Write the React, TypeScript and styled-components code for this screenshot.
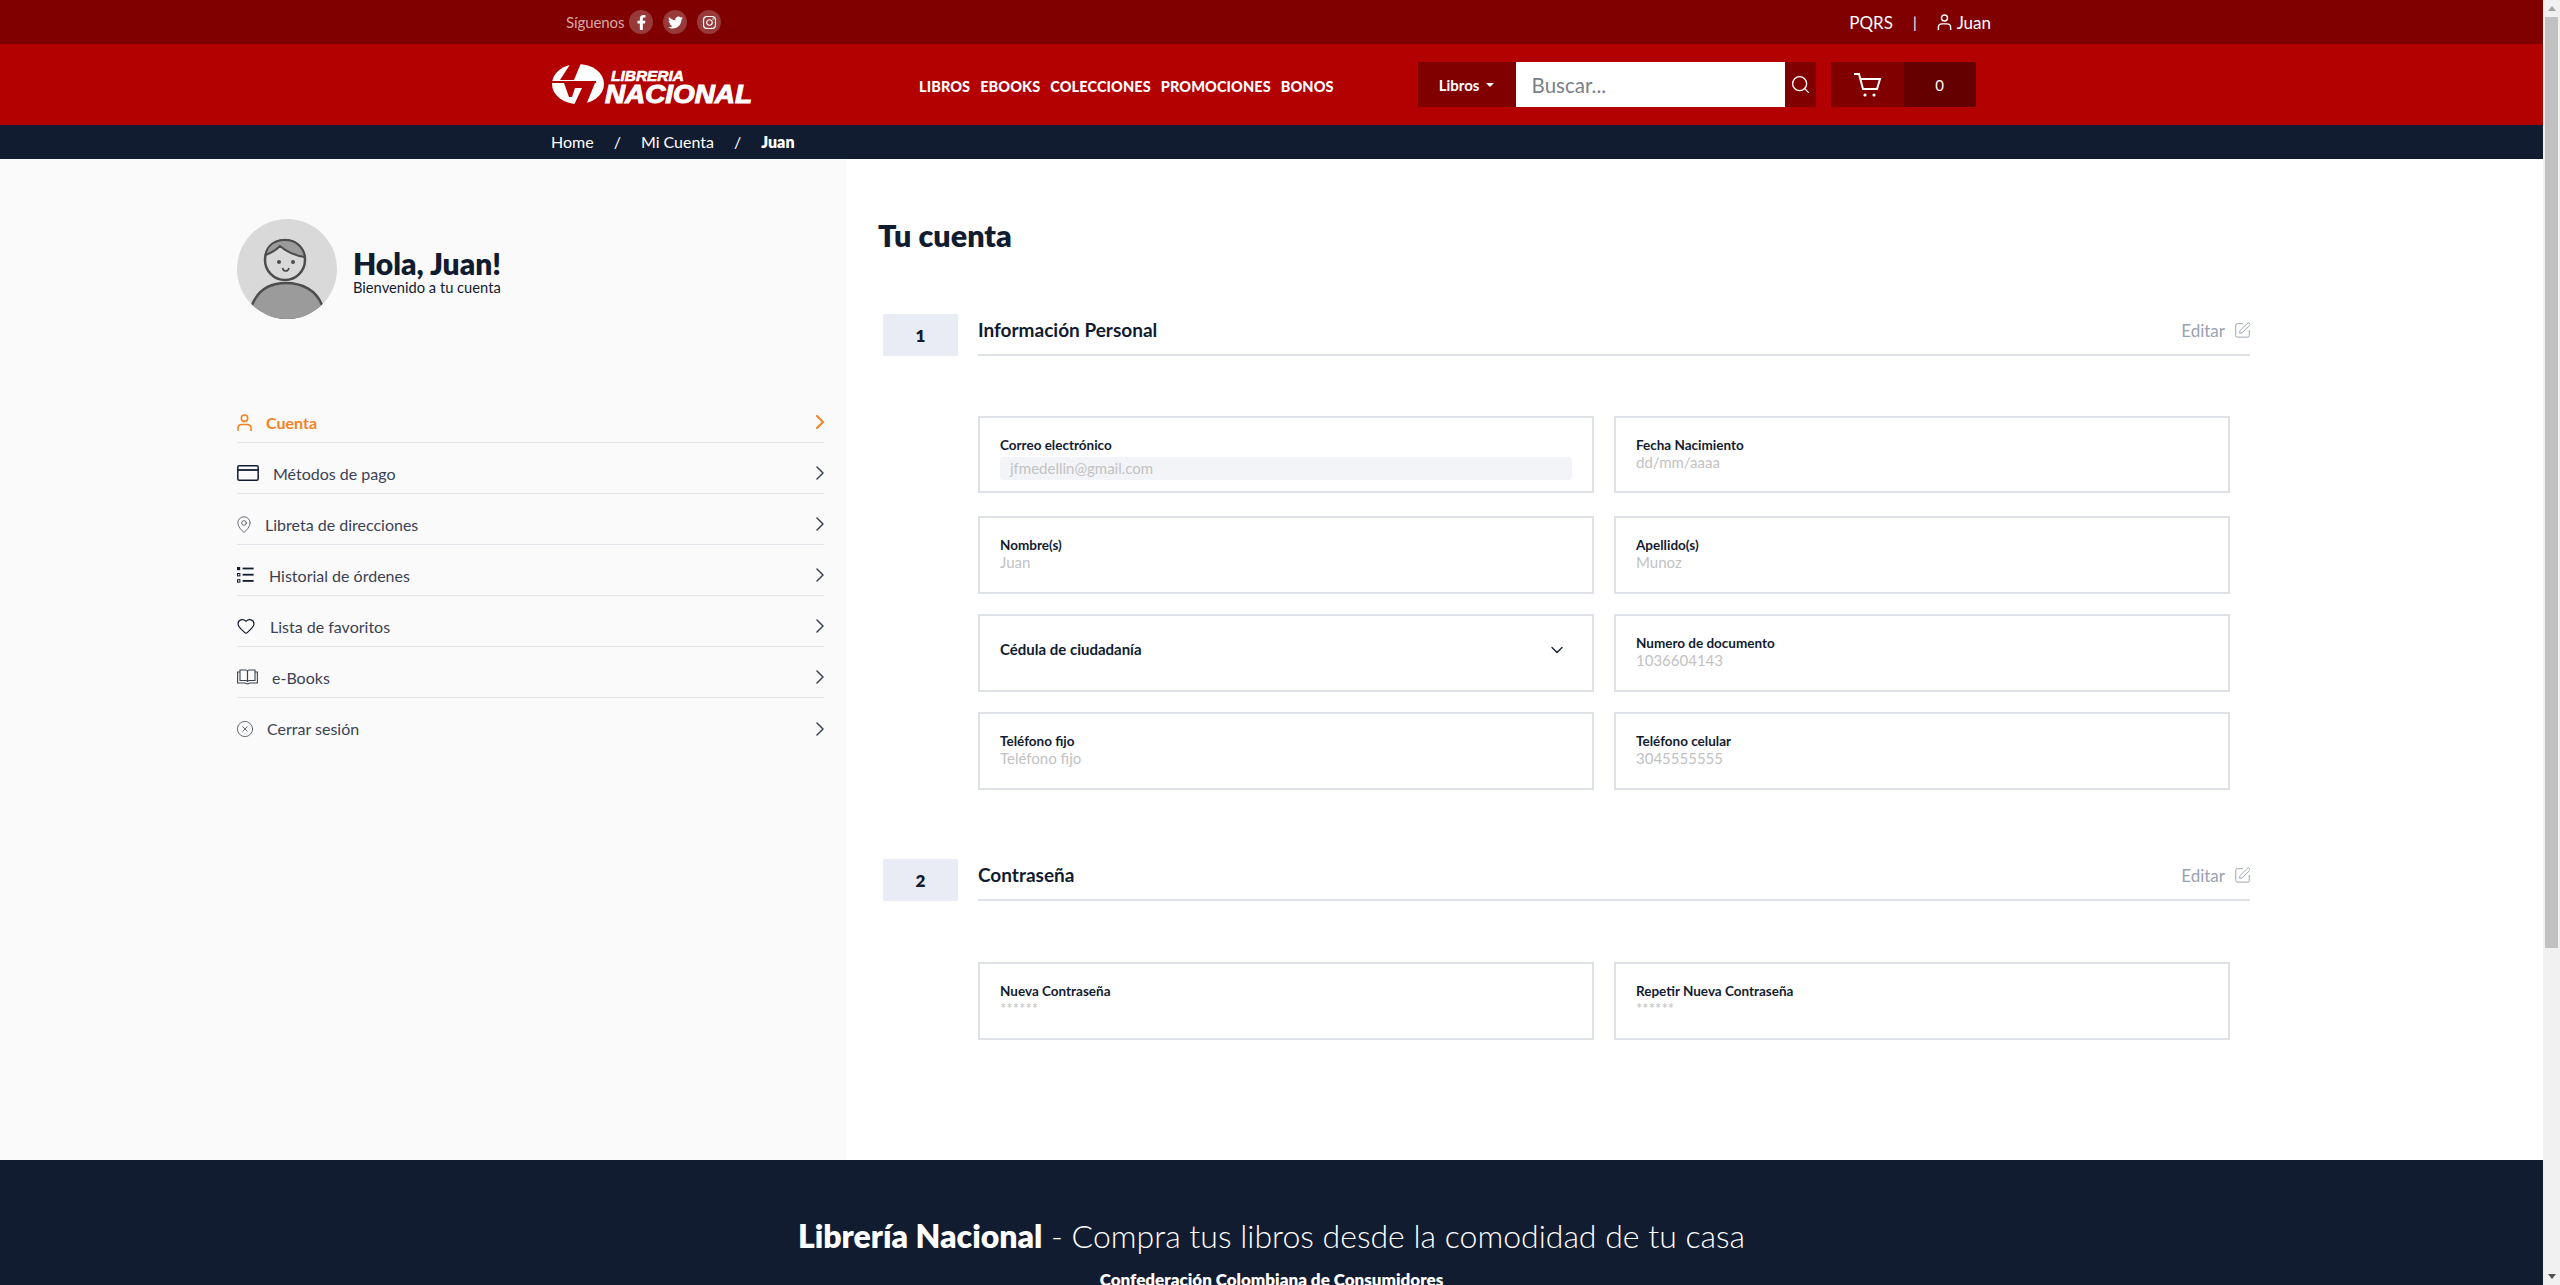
import * as React from 'react'
import styled, {createGlobalStyle} from 'styled-components'
import {ChevronDown, ChevronRight, CircleX, Heart, MapPin, Search, SquarePen} from 'lucide-react'
import {FaFacebookF, FaInstagram, FaTwitter} from 'react-icons/fa'

const FONT = '"Lato", "Noto Sans", sans-serif'

const GlobalStyle = createGlobalStyle`
  body {
    margin: 0;
    font-family: ${FONT};
    color: #121c30;
    background: #fff;
    overflow-x: hidden;
  }
  * { box-sizing: border-box; }
`

const Page = styled.div`
  width: 2543px;
`

const ScrollTrack = styled.div`
  position: fixed;
  top: 0;
  right: 0;
  bottom: 0;
  display: flex;
  flex-direction: column;
  width: 17px;
  background: #f1f1f1;
`

const ScrollArrow = styled.div<{$down?: boolean}>`
  width: 0;
  height: 0;
  margin: 6px auto;
  border-left: 4px solid transparent;
  border-right: 4px solid transparent;
  ${p => (p.$down ? 'border-top: 5px solid #505050; margin-top: auto;' : 'border-bottom: 5px solid #a3a3a3;')}
`

const ScrollThumb = styled.div`
  height: 931px;
  margin: 0 2px;
  background: #c1c1c1;
`

const TopBar = styled.div`
  display: flex;
  align-items: center;
  height: 44px;
  padding: 0 552px 0 566px;
  background: #800000;
  color: #fff;
  font-size: 16px;
`

const Follow = styled.span`
  color: #d9a6a6;
  font-size: 15px;
  letter-spacing: -0.1px;
  margin-right: 5px;
`

const SocialLink = styled.span`
  display: flex;
  align-items: center;
  justify-content: center;
  width: 24px;
  height: 24px;
  margin-right: 10px;
  border-radius: 50%;
  background: #983a3a;
  color: #fff;
  font-size: 15px;
`

const TopRight = styled.div`
  display: flex;
  align-items: center;
  margin-left: auto;
  font-size: 17px;
`

const TopSeparator = styled.span`
  margin: 0 20px;
  font-size: 15px;
`

const JuanName = styled.span`
  margin-left: 5px;
`

const HeaderBar = styled.div`
  display: flex;
  align-items: center;
  height: 81px;
  padding-left: 552px;
  background: #b30000;
`

const NavList = styled.nav`
  display: flex;
  gap: 10px;
  margin-left: 165px;
  padding-top: 4px;
  color: #fff;
  font-size: 14.5px;
  font-weight: 900;
  letter-spacing: 0.1px;
`

const SearchBox = styled.div`
  display: flex;
  height: 45px;
  margin-left: 84px;
`

const CategoryButton = styled.div`
  display: flex;
  align-items: center;
  justify-content: center;
  gap: 7px;
  width: 98px;
  background: #800000;
  color: #fff;
  font-size: 15px;
  font-weight: 700;
`

const Caret = styled.span`
  width: 0;
  height: 0;
  border-left: 4px solid transparent;
  border-right: 4px solid transparent;
  border-top: 4px solid #fff;
`

const SearchInput = styled.div`
  display: flex;
  align-items: center;
  width: 269px;
  padding-left: 16px;
  background: #fff;
  color: #7b8088;
  font-size: 20.5px;
`

const SearchButton = styled.div`
  display: flex;
  align-items: center;
  justify-content: center;
  width: 31px;
  background: #800000;
  color: #fff;
`

const CartBox = styled.div`
  display: flex;
  height: 45px;
  margin-left: 15px;
`

const CartIcon = styled.div`
  display: flex;
  align-items: center;
  justify-content: center;
  width: 73px;
  background: #800000;
`

const CartCount = styled.div`
  display: flex;
  align-items: center;
  justify-content: center;
  width: 72px;
  background: #640000;
  color: #fff;
  font-size: 15px;
`

const Crumbs = styled.div`
  display: flex;
  align-items: center;
  height: 34px;
  padding: 0 0 2px 551px;
  background: #121c30;
  color: #fff;
  font-size: 16px;
`

const CrumbSeparator = styled.span`
  margin: 0 20px;
`

const CrumbCurrent = styled.span`
  font-weight: 800;
`

const Layout = styled.div`
  display: flex;
  height: 1001px;
`

const Sidebar = styled.aside`
  width: 847px;
  padding: 60px 23px 0 237px;
  background: #fafafa;
`

const Profile = styled.div`
  display: flex;
  align-items: center;
  gap: 16px;
  margin-bottom: 73px;
`

const Greeting = styled.h2`
  margin: 5px 0 0;
  font-size: 30px;
  line-height: 30px;
  font-weight: 800;
`

const Welcome = styled.div`
  margin-top: 1px;
  font-size: 14.7px;
  line-height: 16px;
  font-weight: 400;
`

const MenuRow = styled.div<{$active?: boolean}>`
  display: flex;
  align-items: center;
  height: 51px;
  padding-top: 10px;
  border-bottom: 1px solid #e3e4ea;
  color: ${p => (p.$active ? '#f5821f' : '#3b4252')};
  font-size: 16px;
  font-weight: ${p => (p.$active ? 700 : 400)};

  &:last-child {
    border-bottom: 0;
  }
`

const MenuIcon = styled.span<{$gap: number}>`
  display: flex;
  margin-right: ${p => p.$gap}px;
`

const MenuChevron = styled(ChevronRight)`
  margin-left: auto;
`

const Content = styled.main`
  flex: 1;
  padding: 60px 0 0 31px;
`

const PageTitle = styled.h1`
  margin: 0 0 59px;
  height: 36px;
  font-size: 30.5px;
  line-height: 33px;
  font-weight: 800;
`

const SectionHead = styled.div`
  display: flex;
  margin-left: 5px;
  width: 1367px;
  gap: 20px;
`

const StepNumber = styled.div`
  display: flex;
  align-items: center;
  justify-content: center;
  width: 75px;
  height: 42px;
  background: #e9ecf5;
  font-size: 17px;
  font-weight: 800;
`

const SectionBar = styled.div`
  display: flex;
  flex: 1;
  justify-content: space-between;
  height: 42px;
  padding-top: 4px;
  border-bottom: 2px solid #dee2e6;
`

const SectionTitle = styled.div`
  font-size: 19px;
  line-height: 24px;
  font-weight: 700;
`

const EditLink = styled.div`
  display: flex;
  align-items: center;
  gap: 10px;
  height: 24px;
  color: #9aa2b1;
  font-size: 17px;
`

const FieldGrid = styled.div<{$before: number; $after: number}>`
  display: grid;
  grid-template-columns: 616px 616px;
  gap: 20px;
  margin: ${p => p.$before}px 0 ${p => p.$after}px 100px;
`

const FieldBox = styled.div<{$first?: boolean}>`
  height: ${p => (p.$first ? 77 : 78)}px;
  margin-bottom: ${p => (p.$first ? 3 : 0)}px;
  padding: 19px 20px 0;
  border: 2px solid #dee2e6;
`

const FieldLabel = styled.div`
  font-size: 13.5px;
  line-height: 16px;
  font-weight: 700;
`

const FieldValue = styled.div<{$filled?: boolean}>`
  margin-top: ${p => (p.$filled ? 4 : 1)}px;
  padding-left: ${p => (p.$filled ? 10 : 0)}px;
  border-radius: 4px;
  background: ${p => (p.$filled ? '#f3f4f8' : 'transparent')};
  color: #c2c2c2;
  font-size: 15px;
  line-height: ${p => (p.$filled ? 23 : 17)}px;
`

const SelectBox = styled(FieldBox)`
  display: flex;
  align-items: flex-start;
  justify-content: space-between;
  padding-top: 24px;
  padding-right: 25px;
  font-size: 15px;
  line-height: 18px;
  font-weight: 700;
`

const Footer = styled.footer`
  height: 570px;
  padding-top: 59px;
  background: #121c30;
  color: #fff;
  text-align: center;
`

const FooterTitle = styled.div`
  font-size: 32px;
  line-height: 33px;
  font-weight: 300;

  strong {
    font-weight: 800;
  }
`

const FooterLine = styled.div`
  margin-top: 18px;
  font-size: 17px;
  line-height: 20px;
  font-weight: 800;
`

const Logo = () => (
  <svg width="202" height="42" viewBox="0 0 202 42">
    <ellipse cx="26" cy="20" rx="26" ry="20" fill="#fff"/>
    <path d="M19 -1 L29 -1 L22 16 L8 16 Z" fill="#b30000"/>
    <path d="M0 17 H44 V19 H0 Z" fill="#b30000"/>
    <path d="M12 19 L17 33 L20 33 L23 24 L30 24 L22 41 L34 41 L43 19 Z" fill="#b30000"/>
    <text x="59" y="17" fill="#fff" stroke="#fff" strokeWidth="0.6" fontFamily="Liberation Sans, sans-serif" fontStyle="italic" fontWeight="700" fontSize="14" textLength="73" lengthAdjust="spacingAndGlyphs">LIBRERIA</text>
    <text x="53" y="39" fill="#fff" stroke="#fff" strokeWidth="1.1" fontFamily="Liberation Sans, sans-serif" fontStyle="italic" fontWeight="700" fontSize="26" textLength="147" lengthAdjust="spacingAndGlyphs">NACIONAL</text>
  </svg>
)

const Cart = () => (
  <svg width="29" height="27" viewBox="0 0 29 27" fill="none" stroke="#fff" strokeWidth="2">
    <path d="M1 3 H6 L10 18 H24 L27 8 H8"/>
    <circle cx="12" cy="24" r="1.6" fill="#fff" stroke="none"/>
    <circle cx="21" cy="24" r="1.6" fill="#fff" stroke="none"/>
  </svg>
)

const UserIcon = ({width, height, stroke}: {width: number; height: number; stroke: number}) => (
  <svg width={width} height={height} viewBox="0 0 15 17" fill="none" stroke="currentColor" strokeWidth={stroke}>
    <circle cx="7.5" cy="4.2" r="3.2"/>
    <path d="M1 17 V14 C1 11.5 3 10.5 5 10.5 H10 C12 10.5 14 11.5 14 14 V17"/>
  </svg>
)

const Avatar = () => (
  <svg width="100" height="100" viewBox="0 0 100 100">
    <clipPath id="avatar-clip"><circle cx="50" cy="50" r="50"/></clipPath>
    <circle cx="50" cy="50" r="50" fill="#d9d9d9"/>
    <g clipPath="url(#avatar-clip)" stroke="#4d4d4d" strokeWidth="2.5">
      <path d="M15 86 C21 71 33 64 49 64 C65 64 79 71 85 86 L85 100 L15 100 Z" fill="#9b9b9b"/>
      <path d="M15 86 L15 100 L85 100 L85 86" fill="#9b9b9b" stroke="none"/>
      <circle cx="48" cy="41" r="20" fill="#d9d9d9"/>
      <path d="M28.5 36 C30 26 38 21 48 21 C58 21 66 27 68 38 C60 37 50 33 43 27 C39 31 34 34 28.5 36 Z" fill="#9b9b9b" strokeWidth="2"/>
      <circle cx="42" cy="43" r="2" fill="#4d4d4d" stroke="none"/>
      <circle cx="56" cy="43" r="2" fill="#4d4d4d" stroke="none"/>
      <path d="M45.5 49 C46.5 53 51 53 52 49" fill="none" strokeWidth="1.6"/>
    </g>
  </svg>
)

const CardIcon = () => (
  <svg width="22" height="16" viewBox="0 0 22 16" fill="none" stroke="#121c30" strokeWidth="1.5">
    <rect x="0.8" y="0.8" width="20.4" height="14.4" rx="1.5"/>
    <path d="M1 5 H21" strokeWidth="1.8"/>
  </svg>
)

const ListIcon = () => (
  <svg width="17" height="16" viewBox="0 0 17 16" fill="#121c30">
    <rect x="0" y="0" width="3.2" height="3.2"/>
    <rect x="5.6" y="0.6" width="11" height="1.8"/>
    <rect x="0.5" y="6.5" width="2.4" height="2.4" fill="none" stroke="#121c30"/>
    <rect x="5.6" y="6.8" width="11" height="1.8"/>
    <rect x="0.5" y="12.7" width="2.4" height="2.4" fill="none" stroke="#121c30"/>
    <rect x="5.6" y="13" width="11" height="1.8"/>
  </svg>
)

const BookIcon = () => (
  <svg width="21" height="16" viewBox="0 0 21 16" fill="none" stroke="#3b4252" strokeWidth="1.1">
    <path d="M3 1 H9 C10 1 10.5 2 10.5 3 V13 C10.5 12 10 11.5 9 11.5 H3 Z"/>
    <path d="M18 1 H12 C11 1 10.5 2 10.5 3 V13 C10.5 12 11 11.5 12 11.5 H18 Z"/>
    <path d="M3 3 H0.6 V14 H8 L10.5 15 L13 14 H20.4 V3 H18"/>
  </svg>
)

const menu: {label: string; gap: number; icon: React.ReactNode; active?: boolean}[] = [
  {label: 'Cuenta', gap: 14, active: true, icon: <UserIcon width={15} height={17} stroke={1.6}/>},
  {label: 'Métodos de pago', gap: 14, icon: <CardIcon/>},
  {label: 'Libreta de direcciones', gap: 14, icon: <MapPin width={14} height={17} viewBox="3 1 18 22" strokeWidth={1}/>},
  {label: 'Historial de órdenes', gap: 15, icon: <ListIcon/>},
  {label: 'Lista de favoritos', gap: 15, icon: <Heart width={18} height={16} viewBox="1 2 22 20" strokeWidth={1.5} color="#121c30"/>},
  {label: 'e-Books', gap: 14, icon: <BookIcon/>},
  {label: 'Cerrar sesión', gap: 14, icon: <CircleX width={16} height={16} viewBox="1.5 1.5 21 21" strokeWidth={1}/>},
]

const Field = ({label, value, filled, first}: {label: string; value: string; filled?: boolean; first?: boolean}) => (
  <FieldBox $first={first}>
    <FieldLabel>{label}</FieldLabel>
    <FieldValue $filled={filled}>{value}</FieldValue>
  </FieldBox>
)

const Section = ({step, title}: {step: number; title: string}) => (
  <SectionHead>
    <StepNumber>{step}</StepNumber>
    <SectionBar>
      <SectionTitle>{title}</SectionTitle>
      <EditLink>Editar <SquarePen width={15} height={16} viewBox="2 1 20 21" strokeWidth={1.3}/></EditLink>
    </SectionBar>
  </SectionHead>
)

export default function App() {
  return <Page>
    <GlobalStyle/>
    <TopBar>
      <Follow>Síguenos</Follow>
      <SocialLink><FaFacebookF/></SocialLink>
      <SocialLink><FaTwitter/></SocialLink>
      <SocialLink><FaInstagram/></SocialLink>
      <TopRight>
        PQRS
        <TopSeparator>|</TopSeparator>
        <UserIcon width={15} height={16} stroke={1.5}/>
        <JuanName>Juan</JuanName>
      </TopRight>
    </TopBar>
    <HeaderBar>
      <Logo/>
      <NavList>
        <span>LIBROS</span>
        <span>EBOOKS</span>
        <span>COLECCIONES</span>
        <span>PROMOCIONES</span>
        <span>BONOS</span>
      </NavList>
      <SearchBox>
        <CategoryButton>Libros <Caret/></CategoryButton>
        <SearchInput>Buscar...</SearchInput>
        <SearchButton><Search size={21} strokeWidth={1.5}/></SearchButton>
      </SearchBox>
      <CartBox>
        <CartIcon><Cart/></CartIcon>
        <CartCount>0</CartCount>
      </CartBox>
    </HeaderBar>
    <Crumbs>
      Home<CrumbSeparator>/</CrumbSeparator>Mi Cuenta<CrumbSeparator>/</CrumbSeparator><CrumbCurrent>Juan</CrumbCurrent>
    </Crumbs>
    <Layout>
      <Sidebar>
        <Profile>
          <Avatar/>
          <div>
            <Greeting>Hola, Juan!</Greeting>
            <Welcome>Bienvenido a tu cuenta</Welcome>
          </div>
        </Profile>
        {menu.map(item => (
          <MenuRow key={item.label} $active={item.active}>
            <MenuIcon $gap={item.gap}>{item.icon}</MenuIcon>
            {item.label}
            <MenuChevron width={8} height={14} viewBox="8 5 8 14" strokeWidth={item.active ? 2 : 1.5}/>
          </MenuRow>
        ))}
      </Sidebar>
      <Content>
        <PageTitle>Tu cuenta</PageTitle>
        <Section step={1} title="Información Personal"/>
        <FieldGrid $before={60} $after={69}>
          <Field label="Correo electrónico" value="jfmedellin@gmail.com" filled first/>
          <Field label="Fecha Nacimiento" value="dd/mm/aaaa" first/>
          <Field label="Nombre(s)" value="Juan"/>
          <Field label="Apellido(s)" value="Munoz"/>
          <SelectBox>Cédula de ciudadanía <ChevronDown size={20} strokeWidth={1.5}/></SelectBox>
          <Field label="Numero de documento" value="1036604143"/>
          <Field label="Teléfono fijo" value="Teléfono fijo"/>
          <Field label="Teléfono celular" value="3045555555"/>
        </FieldGrid>
        <Section step={2} title="Contraseña"/>
        <FieldGrid $before={61} $after={0}>
          <Field label="Nueva Contraseña" value="******"/>
          <Field label="Repetir Nueva Contraseña" value="******"/>
        </FieldGrid>
      </Content>
    </Layout>
    <Footer>
      <FooterTitle><strong>Librería Nacional</strong> - Compra tus libros desde la comodidad de tu casa</FooterTitle>
      <FooterLine>Confederación Colombiana de Consumidores</FooterLine>
    </Footer>
    <ScrollTrack>
      <ScrollArrow/>
      <ScrollThumb/>
      <ScrollArrow $down/>
    </ScrollTrack>
  </Page>
}
